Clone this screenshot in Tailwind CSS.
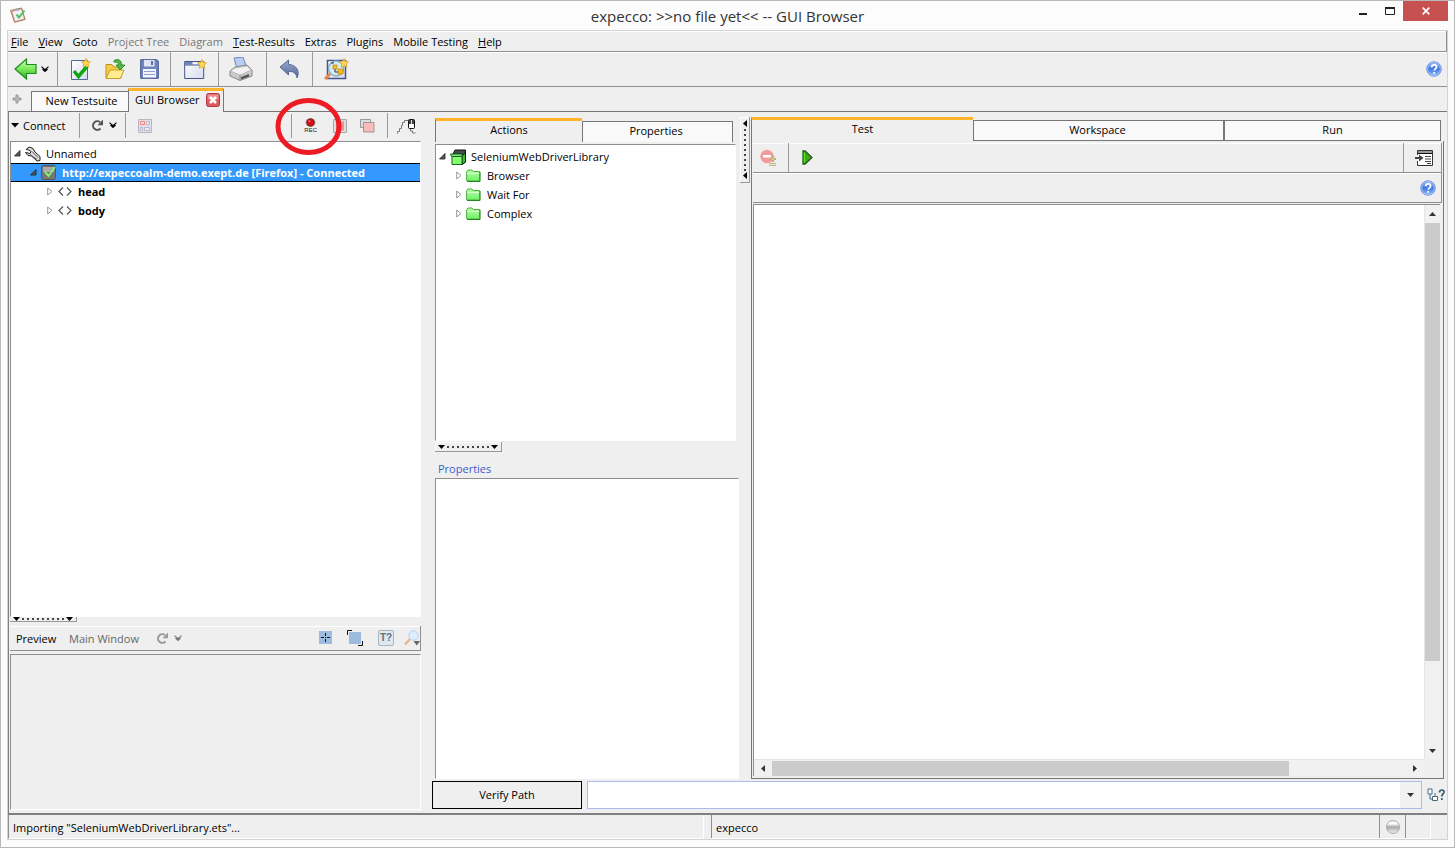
<!DOCTYPE html>
<html lang="en">
<head>
<meta charset="utf-8">
<title>expecco: &gt;&gt;no file yet&lt;&lt; -- GUI Browser</title>
<script src="https://cdn.jsdelivr.net/npm/@tailwindcss/browser@4"></script>
</head>
<body class="relative flex h-screen flex-col overflow-hidden border border-[#b9b9b9] bg-[#fcfcfc] px-[6px] pb-[7px] font-['Open_Sans',sans-serif] text-[11px] leading-4 text-black">

<svg class="absolute h-0 w-0" aria-hidden="true">
  <defs>
    <linearGradient id="gGreen" x1="0" y1="0" x2="0" y2="1"><stop offset="0" stop-color="#d2ffc0"/><stop offset=".5" stop-color="#7be85a"/><stop offset="1" stop-color="#27b327"/></linearGradient>
    <linearGradient id="gBlue" x1="0" y1="0" x2="0" y2="1"><stop offset="0" stop-color="#8cb4f5"/><stop offset=".5" stop-color="#4277e0"/><stop offset="1" stop-color="#8fc0ff"/></linearGradient>
    <linearGradient id="gSlate" x1="0" y1="0" x2="0" y2="1"><stop offset="0" stop-color="#9aa8cb"/><stop offset="1" stop-color="#55689c"/></linearGradient>
    <linearGradient id="gPage" x1="0" y1="0" x2="1" y2="1"><stop offset="0" stop-color="#ffffff"/><stop offset="1" stop-color="#d5dbee"/></linearGradient>
    <linearGradient id="gFolder" x1="0" y1="0" x2="0" y2="1"><stop offset="0" stop-color="#b6ffa6"/><stop offset="1" stop-color="#6ff36a"/></linearGradient>
    <linearGradient id="gBall" x1="0" y1="0" x2="0" y2="1"><stop offset="0" stop-color="#ededed"/><stop offset=".25" stop-color="#ffffff"/><stop offset=".5" stop-color="#a9a9a9"/><stop offset="1" stop-color="#f6f6f6"/></linearGradient>
  </defs>
  <symbol id="help" viewBox="0 0 16 16"><circle cx="8" cy="8" r="7.3" fill="url(#gBlue)" stroke="#7d9be0"/><circle cx="8" cy="8" r="6.3" fill="none" stroke="#b8cffb" stroke-width=".7"/><path d="M5.600 6.200c0-3.200 5-3.200 5-.2 0 1.900-2.300 1.900-2.300 3.600M8.200 11v1.700" fill="none" stroke="#fff" stroke-width="1.800"/></symbol>
  <symbol id="chev" viewBox="0 0 8 7"><path d="M.5.7 4 3.700 7.500.7M1.500 3 4 5.500 6.500 3" fill="none" stroke="currentColor" stroke-width="1.100"/></symbol>
  <symbol id="open" viewBox="0 0 7 7"><path d="M6 .5v5.500H.5z" fill="#555" stroke="#222" stroke-width=".8"/></symbol>
  <symbol id="closed" viewBox="0 0 6 9"><path d="M.7 1v7l4.300-3.500z" fill="#fff" stroke="#999"/></symbol>
  <symbol id="tag" viewBox="0 0 14 9"><path d="M5 .5 1 4.500l4 4M9 .5l4 4-4 4" fill="none" stroke="#555" stroke-width="1.200"/></symbol>
  <symbol id="folder" viewBox="0 0 15 13"><path d="M.6 11.500v-9L2 1h4l1.200 1.500h6.500v9.500H1z" fill="url(#gFolder)" stroke="#4fae43"/><path d="M1 4.500h12.500" stroke="#dcffd2"/><path d="M14 3v9.500H1" fill="none" stroke="#26851f"/></symbol>
  <symbol id="star" viewBox="0 0 10 10"><path d="m5 .5 1.300 3 3.200.3L7.200 6l.7 3.300L5 7.600 2.100 9.300 2.800 6 .5 3.800l3.200-.3z" fill="#ffd84f" stroke="#d9a52c" stroke-width=".8"/></symbol>
  <symbol id="reload" viewBox="0 0 13 13"><path d="M9.500 9.500A4.300 4.300 0 1 1 9 3.200" fill="none" stroke="currentColor" stroke-width="2"/><path d="M12 .5v5.800H6.500z" fill="currentColor"/></symbol>
</svg>

<header class="flex h-[29px] shrink-0 items-start">
  <svg class="mt-[6px] ml-[3px] h-4 w-4 shrink-0" viewBox="0 0 16 16"><path d="m.6 3.500 11-2.500 3.500 11.500-10.500 2.800z" fill="#d9a68c" stroke="#b07a62"/><path d="m2.500 4.800 8.800-2 2.600 8.700-8.600 2.400z" fill="#eef3fb"/><path d="m4.500 2 4-1 .6 2-4 .9z" fill="#a1aab5"/><path d="m6.500 7.500 2.500 3 5.500-7" fill="none" stroke="#55c155" stroke-width="2"/></svg>
  <h1 class="min-w-0 flex-1 pt-[5px] pl-20 text-center text-[15px] leading-5 text-[#333]">expecco: &gt;&gt;no file yet&lt;&lt; -- GUI Browser</h1>
  <button class="flex h-5 w-[27px] items-center justify-center" aria-label="Minimize"><svg class="h-[10px] w-[10px]" viewBox="0 0 10 10"><path d="M1 7h8v2H1z" fill="#222"/></svg></button>
  <button class="flex h-5 w-[27px] items-center justify-center" aria-label="Maximize"><svg class="h-[8px] w-[10px]" viewBox="0 0 10 8"><path d="M.5 0v7.500h9V0" fill="none" stroke="#222"/><path d="M0 0h10v2H0z" fill="#222"/></svg></button>
  <button class="flex h-5 w-[45px] items-center justify-center bg-[#c75050]" aria-label="Close"><svg class="h-2 w-2" viewBox="0 0 8 8"><path d="m.7.7 6.600 6.600M7.300.7.7 7.300" stroke="#fff" stroke-width="1.700"/></svg></button>
</header>

<div class="flex min-h-0 flex-1 flex-col border border-[#d2d2d2] bg-[#efefef]">
  <nav class="flex h-[21px] shrink-0 items-center gap-[10px] border-r border-b border-[#8f8f8f] pt-px pl-[3px] shadow-[inset_0_1px_0_#fff]">
    <button><u>F</u>ile</button><button><u>V</u>iew</button><button>Goto</button><button class="text-[#777]">Project Tree</button><button class="text-[#777]">Diagram</button><button><u>T</u>est-Results</button><button>Extras</button><button>Plugins</button><button>Mobile Testing</button><button><u>H</u>elp</button>
  </nav>

  <div class="flex h-[35px] shrink-0 border-b border-[#8f8f8f] shadow-[inset_0_1px_0_#fff]">
    <div class="flex w-[50px] items-center gap-1 border-r border-[#9a9a9a] pl-[6px]">
      <button aria-label="Back"><svg class="h-[22px] w-[23px]" viewBox="0 0 23 22"><path d="M1 11 12.500 1v5.500h9.500v9H12.500V21z" fill="url(#gGreen)" stroke="#1d8c1d" stroke-width="1.200"/></svg></button>
      <button aria-label="Back history"><svg class="h-[7px] w-2"><use href="#chev"/></svg></button>
    </div>
    <div class="flex w-[113px] items-center gap-[14px] border-r border-[#9a9a9a] pl-[12px]">
      <button aria-label="New testsuite"><svg class="h-[23px] w-[21px]" viewBox="0 0 21 23"><path d="M1.500 2.500h16v19h-16z" fill="url(#gPage)" stroke="#54699f"/><path d="m4 13 4.500 5.500L16.500 9" fill="none" stroke="#10a610" stroke-width="3.500"/><use href="#star" x="11" y="0" width="10" height="10"/></svg></button>
      <button aria-label="Open"><svg class="h-[22px] w-[21px]" viewBox="0 0 21 22"><path d="M1 20V6.500h6L9 9h7v11z" fill="#f6cc4a" stroke="#c48f20"/><path d="m1 20.500 4-8.500h14l-3.500 8.500z" fill="#ffec8e" stroke="#c99a28"/><path d="M9 2.500c4-2.500 8 0 7.500 4.500H20l-5 5-4-5h2.500c0-2-1.500-3.500-4.500-2.800z" fill="#4fb83e" stroke="#26821f" stroke-width=".8"/></svg></button>
      <button aria-label="Save"><svg class="h-5 w-[19px]" viewBox="0 0 19 20"><path d="M.7.7h16L18.300 2v17.300H.7z" fill="#7185bd" stroke="#43568b"/><path d="M4 1h10.500v6.500H4z" fill="#dfe5f3"/><path d="M11 2h2v4h-2z" fill="#5b6fa6"/><path d="M3 10h13v8.500H3z" fill="#f1f4fb"/><path d="M4 12.500h11M4 15.500h11" stroke="#8fa0ce"/></svg></button>
    </div>
    <div class="flex w-[48px] items-center border-r border-[#9a9a9a] pl-[13px]">
      <button aria-label="New window"><svg class="h-[21px] w-[23px]" viewBox="0 0 23 21"><path d="M.7 2.500h19v17H.7z" fill="url(#gPage)" stroke="#43568b"/><path d="M1 6h18.500" stroke="#43568b"/><path d="M1 3h7.500v3H1z" fill="#7185bd"/><use href="#star" x="13" y="0" width="10" height="10"/></svg></button>
    </div>
    <div class="flex w-[48px] items-center border-r border-[#9a9a9a] pl-[10px]">
      <button aria-label="Print"><svg class="h-6 w-6" viewBox="0 0 24 24"><path d="m5 1 9-1 3.500 10L8 12z" fill="#b9cdf0" stroke="#7084b5"/><path d="m1 14 5-4 12-2 5 5v6l-12 4.500L1 19z" fill="#c9c9c9" stroke="#888"/><path d="m1.500 14 9.500 4 11.500-5L18 9 6 11z" fill="#f2f2f2" stroke="#aaa" stroke-width=".6"/><path d="m12 20 8-3v2.500l-8 3z" fill="#555"/><path d="M11 18v5" stroke="#888"/></svg></button>
    </div>
    <div class="flex w-[46px] items-center border-r border-[#9a9a9a] pl-[12px]">
      <button aria-label="Undo"><svg class="h-5 w-[21px]" viewBox="0 0 21 20"><path d="M1 8 9.500 1v4.500C17 5.500 21.500 12 18 19c-.5-4-3-7-8.500-6.500V16z" fill="url(#gSlate)" stroke="#596b97"/></svg></button>
    </div>
    <div class="flex flex-1 items-center pl-[11px]">
      <button aria-label="New search"><svg class="h-[22px] w-[25px]" viewBox="0 0 25 22"><path d="M3.500 2.500h18v18h-18z" fill="url(#gPage)" stroke="#43568b" stroke-width="1.500"/><path d="m6 16-5 5" stroke="#e98745" stroke-width="3"/><circle cx="12" cy="10.500" r="7.500" fill="#d4edf5" stroke="#8baec0" stroke-width="1.500"/><path d="M9 7h4v4H9zM14 11h5v5h-5z" fill="#f8bd16" stroke="#b78410" stroke-width=".7"/><path d="M7 5h3M11 11v3h3" fill="none" stroke="#335"/><use href="#star" x="15" y="0" width="10" height="10"/></svg></button>
    </div>
    <button class="mr-[5px] flex items-center" aria-label="Help"><svg class="h-4 w-4"><use href="#help"/></svg></button>
  </div>

  <div class="flex h-[25px] shrink-0 items-end" role="tablist">
    <button class="flex h-[25px] w-[23px] items-start border-b border-[#777] pt-[7px] pl-[4px]" aria-label="Add tab"><svg class="h-[10px] w-[10px]" viewBox="0 0 10 10"><path d="M4 1h2v3h3v2H6v3H4V6H1V4h3z" fill="#bbb" stroke="#999"/></svg></button>
    <button role="tab" class="h-[21px] w-[97px] border border-r-0 border-[#777] bg-[#f9f9f9] pb-[2px] pl-[3px]">New Testsuite</button>
    <button role="tab" aria-selected="true" class="flex h-[24px] w-[96px] items-center justify-between border-t-3 border-r border-l border-t-[#ffb429] border-r-[#777] border-l-[#777] pr-[3px] pb-[3px] pl-[6px]"><span class="whitespace-nowrap">GUI Browser</span><svg class="h-[14px] w-[14px] shrink-0" viewBox="0 0 14 14"><rect x=".5" y=".5" width="13" height="13" rx="2" fill="#dc5960" stroke="#b3373f"/><path d="M1.500 1.500h11v5h-11z" fill="#eb8d91"/><path d="m4 4 6 6M10 4l-6 6" stroke="#fff" stroke-width="2.600"/></svg></button>
    <div class="h-[25px] flex-1 border-b border-[#777]"></div>
  </div>

  <main class="flex min-h-0 flex-1 gap-[11px] border-b-2 border-l border-[#808080] pr-px">
    <section class="flex w-[412px] shrink-0 flex-col pl-px">
      <div class="flex h-[29px] shrink-0 items-center pb-[2px]">
        <button class="flex h-[25px] w-[70px] items-center gap-[4px] border-r border-[#9a9a9a] pl-px"><svg class="h-[5px] w-2" viewBox="0 0 8 5"><path d="M0 0h8L4 4.500z"/></svg>Connect</button>
        <div class="flex h-[25px] w-[46px] items-center gap-[5px] border-r border-[#9a9a9a] pl-[11px]">
          <button class="text-[#555]" aria-label="Refresh"><svg class="h-[13px] w-[13px]"><use href="#reload"/></svg></button>
          <button aria-label="Refresh options"><svg class="h-[7px] w-2"><use href="#chev"/></svg></button>
        </div>
        <button class="ml-[12px]" aria-label="Layout"><svg class="h-[14px] w-[14px]" viewBox="0 0 14 14"><path d="M.5.5h13v13H.5z" fill="#e2dfe8" stroke="#b9b4c4"/><path d="M2.500 2.500h4v3h-4z" fill="#ffe2e2" stroke="#ff7f7f"/><path d="M8.500 2.500h3v3h-3zM2.500 8.500h2v3h-2zM6.500 8.500h5v3h-5z" fill="#eee" stroke="#bbb8cc"/></svg></button>
        <div class="flex h-[25px] flex-1 items-center justify-end">
          <div class="flex h-[24px] items-center gap-[13px] border-l border-[#9a9a9a] pl-[12px]">
            <button class="flex flex-col items-center" aria-label="Record"><svg class="h-[9px] w-[11px]" viewBox="0 0 11 9"><ellipse cx="5.500" cy="4.500" rx="5" ry="4.200" fill="#999"/><circle cx="5.500" cy="4.500" r="3.700" fill="#d40b18" stroke="#821"/><circle cx="4.500" cy="3.200" r="1" fill="#f77"/></svg><span class="font-['Liberation_Sans',sans-serif] text-[6px] leading-[7px] text-[#222]">REC</span></button>
            <button class="ml-[3px]" aria-label="Stop recording"><svg class="h-[14px] w-[14px]" viewBox="0 0 14 14"><path d="M.5.500h13v13H.5z" fill="#ddd" stroke="#aaa"/><path d="M3 2.500h8v9H3z" fill="#fa8c8c"/></svg></button>
            <button aria-label="Copy element"><svg class="h-[14px] w-[15px]" viewBox="0 0 15 14"><path d="M.5.500h10v8H.5z" fill="#ddd" stroke="#999"/><path d="M3.500 3.500h10.500v9.500H3.500z" fill="#fbbaba" stroke="#999"/></svg></button>
          </div>
          <div class="ml-[12px] flex h-[25px] w-[34px] items-center border-l border-[#9a9a9a] pl-[9px]">
            <button aria-label="Mouse tracking"><svg class="h-4 w-[19px]" viewBox="0 0 19 16"><path d="M.5 15.500v-2h2v-3h2v-3h1v-3h2v-2h4M13.500 11v2h2v2h3" fill="none" stroke="#777"/><rect x="11.500" y="1.500" width="6" height="9" rx="1" fill="#fff" stroke="#111"/><path d="M12 2h5v4h-5z" fill="#444"/><path d="M14.500 2v4" stroke="#ddd"/></svg></button>
          </div>
        </div>
      </div>
      <ul class="min-h-0 flex-1 border border-t-[#8f8f8f] border-r-white border-b-white border-l-[#8f8f8f] bg-white pt-[2px]">
        <li class="flex h-[19px] items-center pl-[3px]"><svg class="h-[7px] w-[7px]"><use href="#open"/></svg><svg class="mr-[5px] ml-[4px] h-4 w-4" viewBox="0 0 16 16"><path d="M1 3.500 4 1l4 1.500L10 6l5 4.500v4l-3 .5-5.500-5L3 9.500l-2.500-3L3 7l2 .5L6 5.500 4 4z" fill="#ddd" stroke="#222"/><path d="m7 5.500 6 6M5 8.500l7 5" stroke="#555"/></svg>Unnamed</li>
        <li class="flex h-[19px] items-center border-y border-black bg-[#3399ff] pl-[19px] font-bold text-white"><svg class="h-[7px] w-[7px]"><use href="#open"/></svg><svg class="mr-[5px] ml-[4px] h-[15px] w-4 shrink-0" viewBox="0 0 16 15"><rect x=".5" y=".5" width="14" height="14" rx="2" fill="#777" stroke="#555"/><path d="M2 2h11v5H2z" fill="#aaa"/><path d="m4 7 3.500 4L14 2" fill="none" stroke="#7ff36b" stroke-width="2"/></svg>http://expeccoalm-demo.exept.de [Firefox] - Connected</li>
        <li class="flex h-[19px] items-center pl-[36px] font-bold"><svg class="h-[9px] w-[6px]"><use href="#closed"/></svg><svg class="mr-[6px] ml-[5px] h-[9px] w-[14px]"><use href="#tag"/></svg>head</li>
        <li class="flex h-[19px] items-center pl-[36px] font-bold"><svg class="h-[9px] w-[6px]"><use href="#closed"/></svg><svg class="mr-[6px] ml-[5px] h-[9px] w-[14px]"><use href="#tag"/></svg>body</li>
      </ul>
      <button class="flex h-[5px] w-[67px] shrink-0 items-center justify-between border-r border-b border-[#999] px-[3px]" aria-label="Resize preview"><svg class="h-[4px] w-[7px]" viewBox="0 0 7 4"><path d="M0 0h7L3.500 4z"/></svg><svg class="h-[2px] w-[44px]" viewBox="0 0 44 2"><path d="M1 1h43" stroke="#444" stroke-width="2" stroke-dasharray="2 3"/></svg><svg class="h-[4px] w-[7px]" viewBox="0 0 7 4"><path d="M0 0h7L3.500 4z"/></svg></button>
      <div class="mt-[4px] flex h-[25px] shrink-0 items-center border-r border-b border-[#8f8f8f] pl-[6px] shadow-[inset_0_1px_0_#fff]">
        <button class="w-[53px] pt-px text-left">Preview</button>
        <button class="w-[87px] pt-px text-left whitespace-nowrap text-[#666]">Main Window</button>
        <button class="text-[#999]" aria-label="Refresh preview"><svg class="h-[13px] w-[13px]"><use href="#reload"/></svg></button>
        <button class="ml-[5px] flex-1 text-[#777]" aria-label="Preview options"><svg class="h-[7px] w-2"><use href="#chev"/></svg></button>
        <div class="flex items-center gap-[15px] pb-px">
          <button aria-label="Center"><svg class="h-[13px] w-[13px]" viewBox="0 0 13 13"><path d="M0 0h13v13H0z" fill="#9dbbdc"/><path d="M6.500 2v9M2 6.500h9" stroke="#111" stroke-dasharray="3 1 1 1"/></svg></button>
          <button aria-label="Fit"><svg class="h-4 w-4" viewBox="0 0 16 16"><path d="M2 2h12v12H2z" fill="#9dbbdc"/><path d="M.5 5V.5H5M15.500 11v4.500H11" fill="none" stroke="#111"/></svg></button>
          <button class="flex h-4 w-4 items-center justify-center rounded-[2px] border border-[#aab6bf] bg-[#dce8f2] font-['Liberation_Sans',sans-serif] text-[10px] leading-3 font-bold text-[#62707a]">T?</button>
          <button class="-ml-[5px]" aria-label="Zoom"><svg class="h-4 w-4" viewBox="0 0 16 16"><path d="m6 9-5 5.500" stroke="#eab58b" stroke-width="2.400"/><circle cx="9.500" cy="5.500" r="4.700" fill="#dceeff" stroke="#b5cfea"/><path d="M9.500 11H16l-3.200 4.500z" fill="#666"/></svg></button>
        </div>
      </div>
      <div class="mt-[3px] mb-[3px] h-[156px] shrink-0 border border-t-[#8f8f8f] border-r-white border-b-white border-l-[#8f8f8f]"></div>
    </section>

    <div class="flex min-w-0 flex-1 flex-col">
      <div class="flex min-h-0 flex-1">
        <section class="flex w-[308px] shrink-0 flex-col pl-[3px]">
          <div class="mt-[6px] flex h-[24px] w-[298px] shrink-0" role="tablist">
            <button role="tab" aria-selected="true" class="w-[147px] border-t-3 border-l border-t-[#ffb429] border-l-[#777] pb-[3px]">Actions</button>
            <button role="tab" class="mt-[3px] h-[21px] flex-1 border border-b-0 border-[#777] bg-[#f9f9f9] pr-[3px] pb-[2px]">Properties</button>
          </div>
          <ul class="mt-[2px] min-h-0 w-[301px] flex-1 border border-t-[#8f8f8f] border-r-white border-b-white border-l-[#8f8f8f] bg-white pt-[2px]">
            <li class="flex h-[19px] items-center pl-[3px]"><svg class="h-[7px] w-[7px]"><use href="#open"/></svg><svg class="mr-[5px] ml-[4px] h-4 w-4" viewBox="0 0 16 16"><path d="M5 1h10.500v12L12 15.500V5H3z" fill="#444b4b" stroke="#111"/><path d="M12 6.500 15.500 4v9L12 15.500z" fill="#3dbd2d" stroke="#111"/><path d="M2 7.500h10v8H2z" fill="#86fb69" stroke="#163"/><path d="M.5 5H12v2.500H1.500z" fill="#7de866" stroke="#163"/></svg>SeleniumWebDriverLibrary</li>
            <li class="flex h-[19px] items-center pl-[20px]"><svg class="h-[9px] w-[6px]"><use href="#closed"/></svg><svg class="mr-[6px] ml-[4px] h-[13px] w-[15px]"><use href="#folder"/></svg>Browser</li>
            <li class="flex h-[19px] items-center pl-[20px]"><svg class="h-[9px] w-[6px]"><use href="#closed"/></svg><svg class="mr-[6px] ml-[4px] h-[13px] w-[15px]"><use href="#folder"/></svg>Wait For</li>
            <li class="flex h-[19px] items-center pl-[20px]"><svg class="h-[9px] w-[6px]"><use href="#closed"/></svg><svg class="mr-[6px] ml-[4px] h-[13px] w-[15px]"><use href="#folder"/></svg>Complex</li>
          </ul>
          <button class="mt-px flex h-[10px] w-[67px] shrink-0 items-center justify-between border-r border-b border-[#999] px-[3px] shadow-[inset_1px_1px_0_#fff]" aria-label="Resize properties"><svg class="h-[4px] w-[7px]" viewBox="0 0 7 4"><path d="M0 0h7L3.500 4z"/></svg><svg class="h-[2px] w-[44px]" viewBox="0 0 44 2"><path d="M1 1h43" stroke="#444" stroke-width="2" stroke-dasharray="2 3"/></svg><svg class="h-[4px] w-[7px]" viewBox="0 0 7 4"><path d="M0 0h7L3.500 4z"/></svg></button>
          <h2 class="mt-[9px] mb-px pl-[3px] text-[#3a5fcd]">Properties</h2>
          <div class="h-[301px] w-[304px] shrink-0 border border-t-[#8f8f8f] border-r-white border-b-white border-l-[#8f8f8f] bg-white"></div>
        </section>
        <button class="mt-[5px] mr-px flex h-[66px] w-[10px] shrink-0 flex-col items-center justify-between border-r border-b border-[#999] py-[3px] shadow-[inset_1px_1px_0_#fff]" aria-label="Resize editor"><svg class="h-[7px] w-[4px]" viewBox="0 0 4 7"><path d="M4 0v7L0 3.500z"/></svg><svg class="h-[44px] w-[2px]" viewBox="0 0 2 44"><path d="M1 1v43" stroke="#444" stroke-width="2" stroke-dasharray="2 3"/></svg><svg class="h-[7px] w-[4px]" viewBox="0 0 4 7"><path d="M4 0v7L0 3.500z"/></svg></button>
        <section class="mr-[2px] flex min-w-0 flex-1 flex-col">
          <div class="mt-[5px] grid h-[24px] shrink-0 grid-cols-[222fr_250fr_221fr] items-end" role="tablist">
            <button role="tab" aria-selected="true" class="h-[24px] border-t-3 border-l border-t-[#ffb429] border-l-[#777] pb-[3px]">Test</button>
            <button role="tab" class="h-[21px] border border-r-0 border-[#777] bg-[#f9f9f9] pr-[2px] pb-[2px]">Workspace</button>
            <button role="tab" class="mr-[3px] h-[21px] border border-l-2 border-[#777] bg-[#f9f9f9] pb-[2px]">Run</button>
          </div>
          <div class="flex min-h-0 flex-1 flex-col border-r border-b border-l border-[#777] pt-[2px] pr-px pb-[2px] pl-px">
            <div class="flex h-[30px] shrink-0 border-r border-b border-[#8f8f8f] shadow-[inset_0_1px_0_#fff]">
              <button class="flex w-[36px] items-center border-r border-[#9a9a9a] pl-[7px]" aria-label="Clear"><svg class="h-[17px] w-[17px]" viewBox="0 0 17 17"><circle cx="7" cy="7.500" r="6.700" fill="#f59a9a"/><path d="M3 6h8v2.500H3z" fill="#fff"/><path d="M13 7v6M10 10h6M9 15.500h7" stroke="#8d7b46" stroke-width="2.200"/><path d="M13 7v6M10 10h6M9 15.500h7" stroke="#f2e6b4"/></svg></button>
              <button class="flex items-center pl-[13px]" aria-label="Run"><svg class="h-[15px] w-[11px]" viewBox="0 0 11 15"><path d="M1 1h2l7 6.500L3 14H1z" fill="#45a420" stroke="#1c5e16" stroke-width="1.300"/><path d="M2.300 2.500v10" stroke="#5df31f"/></svg></button>
              <div class="flex-1"></div>
              <button class="flex w-[38px] items-center border-l border-[#9a9a9a] pl-[11px]" aria-label="Insert into editor"><svg class="h-4 w-[18px]" viewBox="0 0 18 16"><path d="M2.500 5V.5h15v15h-15V11" fill="#fff" stroke="#333"/><path d="M3 1h14v2H3z" fill="#999"/><path d="M3 3.500h14" stroke="#111"/><path d="M10 6.500h6M10 9h6M10 11.500h6M12 13.500h4" stroke="#444"/><path d="M0 7h4V4.500L8.500 8 4 11.500V9H0z" fill="#444"/></svg></button>
            </div>
            <div class="mb-px flex h-[30px] shrink-0 items-center justify-end border-r border-b border-[#8f8f8f] pr-[5px] shadow-[inset_0_1px_0_#fff]"><button aria-label="Editor help"><svg class="h-4 w-4"><use href="#help"/></svg></button></div>
            <div class="mr-[2px] grid min-h-0 flex-1 grid-cols-[1fr_16px] grid-rows-[1fr_17px] border-t border-l border-[#8f8f8f]">
              <textarea class="h-full w-full resize-none bg-white outline-none" aria-label="Test editor"></textarea>
              <div class="flex flex-col border-l border-[#e5e5e5] bg-[#f1f1f1]">
                <button class="flex h-[18px] items-center justify-center" aria-label="Scroll up"><svg class="h-[4px] w-[7px]" viewBox="0 0 7 4"><path d="M0 4h7L3.500 0z" fill="#333"/></svg></button>
                <div class="flex min-h-0 flex-1 flex-col"><div class="min-h-0 flex-[438] bg-[#cbcbcb]"></div><div class="flex-[81]"></div></div>
                <button class="flex h-[17px] items-center justify-center" aria-label="Scroll down"><svg class="h-[4px] w-[7px]" viewBox="0 0 7 4"><path d="M0 0h7L3.500 4z" fill="#333"/></svg></button>
              </div>
              <div class="flex border-t border-[#e5e5e5] bg-[#f1f1f1]">
                <button class="flex w-[18px] items-center justify-center" aria-label="Scroll left"><svg class="h-[7px] w-[4px]" viewBox="0 0 4 7"><path d="M4 0v7L0 3.500z" fill="#333"/></svg></button>
                <div class="flex flex-1 pt-px"><div class="flex-[517] bg-[#cbcbcb]"></div><div class="flex-[117]"></div></div>
                <button class="flex w-[18px] items-center justify-center" aria-label="Scroll right"><svg class="h-[7px] w-[4px]" viewBox="0 0 4 7"><path d="M0 0v7l4-3.500z" fill="#333"/></svg></button>
              </div>
              <div class="bg-[#efefef]"></div>
            </div>
          </div>
        </section>
      </div>
      <div class="mt-[2px] mb-[4px] flex h-[28px] shrink-0">
        <button class="mr-[5px] w-[150px] border border-black">Verify Path</button>
        <div class="flex min-w-0 flex-1 border border-[#abbceb] bg-white">
          <input class="min-w-0 flex-1 px-1 outline-none" type="text" aria-label="Path">
          <button class="flex w-[21px] items-center justify-center bg-[#f1f1f1]" aria-label="Path history"><svg class="h-[4px] w-[7px]" viewBox="0 0 7 4"><path d="M0 0h7L3.500 4z" fill="#333"/></svg></button>
        </div>
        <button class="ml-[5px] flex w-[19px] items-center" aria-label="Identify path"><svg class="h-[14px] w-[18px]" viewBox="0 0 18 14"><path d="M1 1h4v5H1zM5.500 8.500h5v4h-5z" fill="#fff" stroke="#456a82"/><path d="M3 6v5h2.500M8 8.500V5" fill="none" stroke="#456a82"/><path d="M12.500 4.500c0-3.500 4.500-3 4.500-.5 0 2-2.200 2-2.200 4.500M14.800 10v2" fill="none" stroke="#315d7a" stroke-width="1.700"/></svg></button>
      </div>
    </div>
  </main>

  <footer class="flex h-[24px] shrink-0 gap-[7px] pr-[16px] leading-[26px]">
    <div class="flex-[693] border-r border-b border-l border-r-white border-b-white border-l-[#8f8f8f] pl-[4px]">Importing "SeleniumWebDriverLibrary.ets"...</div>
    <div class="flex flex-[723] border-b border-white">
      <div class="flex-1 border-l border-[#8f8f8f] pl-[4px]">expecco</div>
      <div class="flex w-[26px] items-center justify-center border-l border-[#8f8f8f]"><svg class="h-[14px] w-[14px]" viewBox="0 0 14 14"><circle cx="7" cy="7" r="6.500" fill="url(#gBall)" stroke="#aaa"/></svg></div>
      <div class="w-[26px] border-r border-l border-r-white border-l-[#8f8f8f]"></div>
    </div>
  </footer>
</div>

<svg class="pointer-events-none absolute top-[96px] left-[274px] h-[59px] w-[68px]" viewBox="0 0 68 59" aria-hidden="true"><ellipse cx="33.500" cy="29.500" rx="30.500" ry="26" fill="none" stroke="#ed1c24" stroke-width="5"/></svg>
</body>
</html>
